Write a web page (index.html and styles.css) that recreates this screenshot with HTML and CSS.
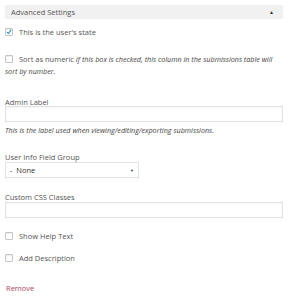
FILE: index.html
```html
<!DOCTYPE html>
<html lang="en">
<head>
  <meta charset="UTF-8">
  <title>Advanced Settings</title>
  <link rel="stylesheet" href="styles.css">
</head>
<body>

  <div class="settings">
    <!-- Section toggle -->
    <div class="settings-header">
      <span>Advanced Settings</span>
      <span class="toggle">&#9650;</span>
    </div>

    <label class="check-row first">
      <span class="box checked">
        <svg width="8" height="8" viewBox="0 0 8 8"><path d="M1.3 4.2 L3.1 6 L6.8 1.2" fill="none" stroke="#1e8cbe" stroke-width="1.4"/></svg>
      </span>
      <span>This is the user's state</span>
    </label>

    <div class="check-block">
      <span class="box inline"></span>Sort as numeric <em>If this box is checked, this column in the submissions table will sort by number.</em>
    </div>

    <div class="field admin">
      <div class="field-label">Admin Label</div>
      <div class="text-input"></div>
      <div class="field-desc">This is the label used when viewing/editing/exporting submissions.</div>
    </div>

    <div class="field group">
      <div class="field-label">User Info Field Group</div>
      <div class="select-input">
        <span>-&nbsp; None</span>
        <span class="caret">&#9660;</span>
      </div>
    </div>

    <div class="field css">
      <div class="field-label">Custom CSS Classes</div>
      <div class="text-input"></div>
    </div>

    <label class="check-row help">
      <span class="box"></span>
      <span>Show Help Text</span>
    </label>

    <label class="check-row desc">
      <span class="box"></span>
      <span>Add Description</span>
    </label>

    <a class="remove" href="#">Remove</a>
  </div>

</body>
</html>
```

FILE: styles.css
```css
body {
  margin: 0;
  padding: 5px 6px 0 5px;
  background-color: #fff;
  font-family: "Open Sans", Arial, sans-serif;
  font-size: 7.5px;
  color: #555;
}

.settings-header {
  height: 14px;
  background-color: #f1f1f1;
  padding: 0 9px 0 6px;
  display: flex;
  justify-content: space-between;
  align-items: center;
  color: #555;
}

.toggle {
  font-size: 5px;
  color: #333;
}

.box {
  width: 6px;
  height: 6px;
  border: 1px solid #c3c6c9;
  border-radius: 1px;
  box-shadow: inset 0 1px 1px rgba(0, 0, 0, 0.08);
  display: inline-flex;
  align-items: center;
  justify-content: center;
  flex-shrink: 0;
}

.box svg {
  margin-top: -1px;
}

.check-row {
  display: flex;
  align-items: center;
  gap: 6px;
  line-height: 12px;
}

.check-row.first { margin-top: 7px; }
.check-row.help { margin-top: 12px; }
.check-row.desc { margin-top: 10px; }

.check-block {
  margin-top: 15px;
  line-height: 12px;
}

.box.inline {
  vertical-align: -1px;
  margin-right: 6px;
}

em {
  font-size: 7.2px;
  color: #444;
}

.field-label {
  line-height: 8px;
}

.text-input {
  height: 14px;
  border: 1px solid #e2e2e2;
  box-shadow: inset 0 1px 2px rgba(0, 0, 0, 0.04);
}

.field-desc {
  font-size: 7.2px;
  font-style: italic;
  color: #444;
  line-height: 12px;
  margin-top: 2px;
}

.field.admin { margin-top: 21px; }
.field.group { margin-top: 17px; }
.field.css { margin-top: 15px; }
.field.group .select-input,
.field.css .text-input { margin-top: 1px; }

.select-input {
  width: 124px;
  height: 14px;
  border: 1px solid #e2e2e2;
  display: flex;
  justify-content: space-between;
  align-items: center;
  padding: 0 4px;
  color: #333;
}

.caret {
  font-size: 4px;
}

.remove {
  display: block;
  margin-top: 18px;
  padding-left: 1px;
  line-height: 12px;
  color: #b0445e;
  text-decoration: none;
}
```
